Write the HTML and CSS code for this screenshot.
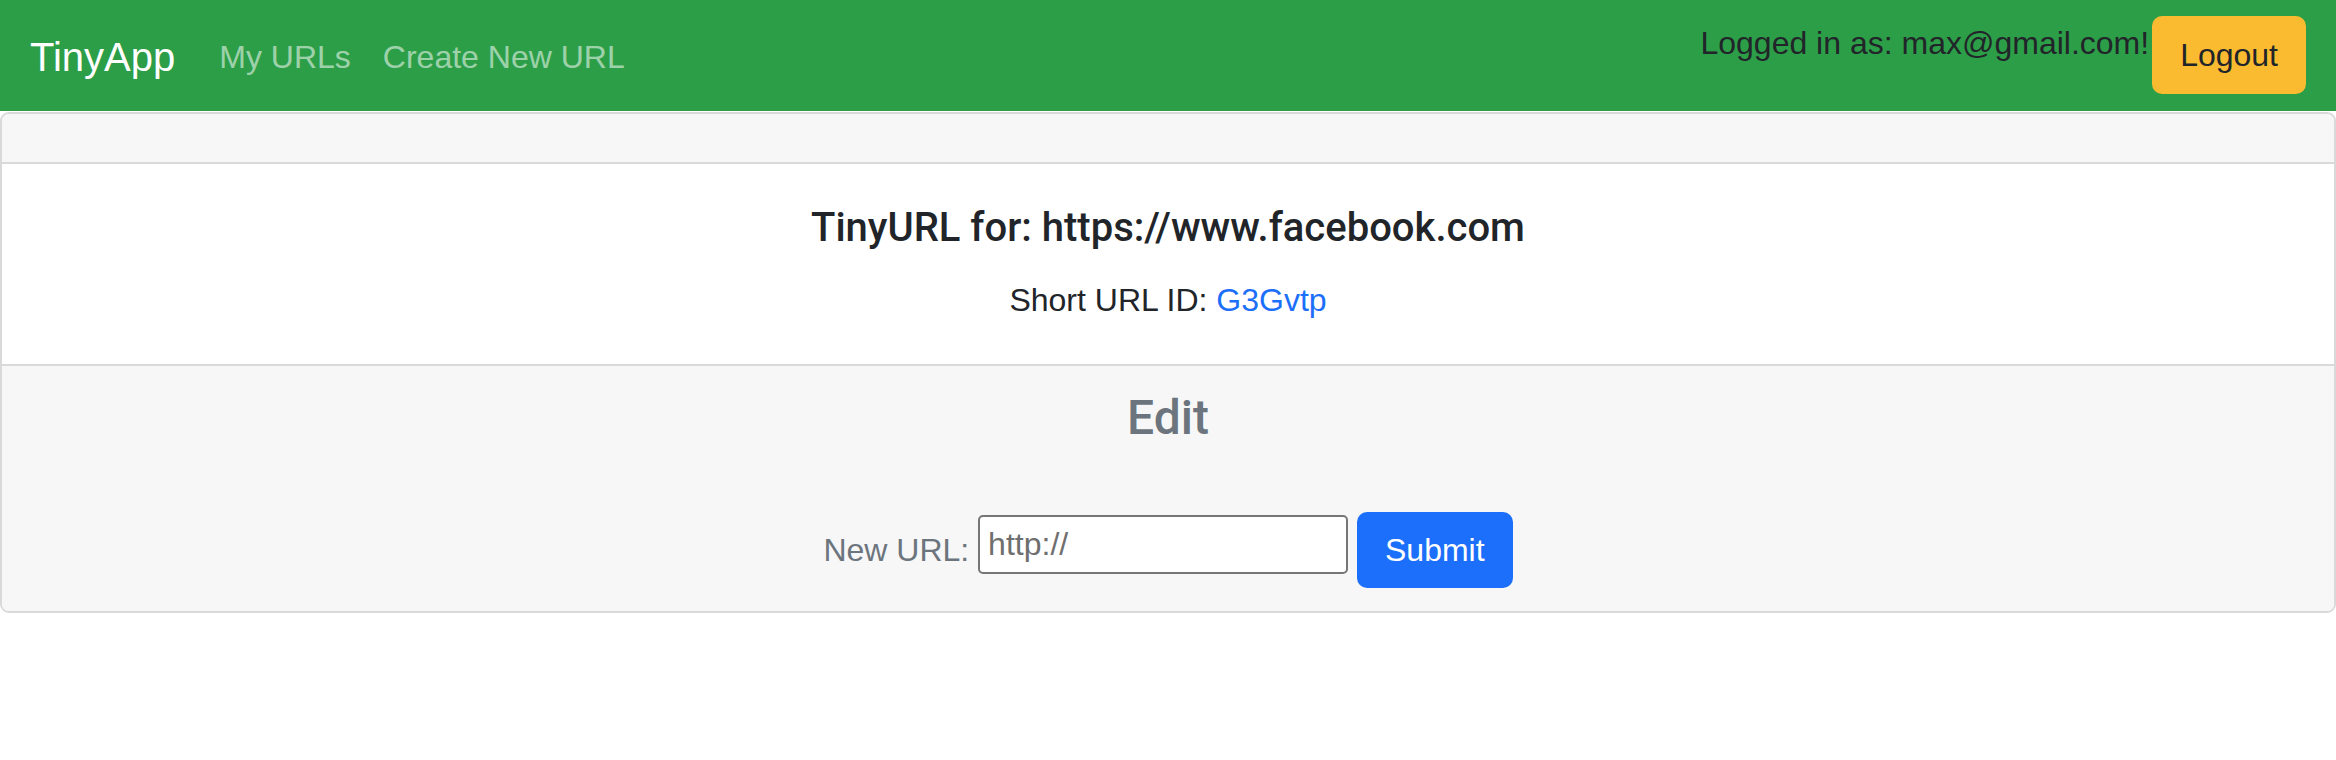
FILE: index.html
```html
<!DOCTYPE html>
<html lang="en">
<head>
<meta charset="utf-8">
<title>TinyApp</title>
<link rel="stylesheet" href="styles.css">
</head>
<body>
<nav class="navbar">
  <a class="brand" href="#">TinyApp</a>
  <a class="nav-link" href="#">My URLs</a>
  <a class="nav-link" href="#">Create New URL</a>
  <div class="user">
    <span class="user-text">Logged in as: max@gmail.com!</span>
    <button class="btn btn-warning" type="button">Logout</button>
  </div>
</nav>
<main class="card">
  <div class="card-header"></div>
  <div class="card-body">
    <h5 class="card-title">TinyURL for: https://www.facebook.com</h5>
    <p class="card-text">Short URL ID: <a class="link" href="#">G3Gvtp</a></p>
  </div>
  <div class="card-footer">
    <h4 class="edit-title">Edit</h4>
    <form class="edit-form">
      <label class="edit-label" for="newurl">New URL:</label>
      <input class="edit-input" id="newurl" type="text" placeholder="http://">
      <button class="btn btn-primary" type="button">Submit</button>
    </form>
  </div>
</main>
</body>
</html>
```
FILE: styles.css
```css
* { box-sizing: border-box; }
html, body {
  margin: 0;
  padding: 0;
  background: #ffffff;
}
body {
  font-family: "Liberation Sans", Arial, sans-serif;
  font-size: 32px;
  line-height: 48px;
  color: #212529;
}
a { text-decoration: none; }

.navbar {
  height: 111px;
  background: #2d9e48;
  display: flex;
  align-items: center;
  padding: 3px 30px 0 30px;
}
.brand {
  color: #ffffff;
  font-size: 40px;
  line-height: 60px;
  margin-right: 28px;
}
.nav-link {
  color: rgba(255, 255, 255, 0.55);
  font-size: 32px;
  line-height: 48px;
  padding: 0 16px;
}
.user {
  margin-left: auto;
  display: flex;
  align-items: flex-start;
  margin-top: -4px;
}
.user-text {
  padding-top: 3px;
  margin-right: 3px;
  color: #212529;
}

.btn {
  font-family: inherit;
  font-size: 32px;
  line-height: 48px;
  padding: 13px 26px;
  border: 2px solid transparent;
  border-radius: 10px;
  cursor: pointer;
}
.btn-warning {
  background: #fbbb30;
  border-color: #fbbb30;
  color: #212529;
}
.btn-primary {
  background: #1c6ffa;
  border-color: #1c6ffa;
  color: #ffffff;
  padding-top: 12px;
  padding-bottom: 12px;
}

.card {
  display: block;
  margin-top: 1px;
  border: 2px solid #d9d9d9;
  border-radius: 9px;
  overflow: hidden;
}
.card-header {
  height: 50px;
  background: #f7f7f7;
  border-bottom: 2px solid #d9d9d9;
}
.card-body {
  background: #ffffff;
  text-align: center;
  padding: 40px 32px 40px;
}
.card-title {
  margin: 0 0 24px;
  font-family: Roboto, "Liberation Sans", sans-serif;
  font-size: 40px;
  line-height: 48px;
  font-weight: 500;
}
.card-text {
  margin: 0;
}
.link { color: #1c6ffa; }

.card-footer {
  background: #f7f7f7;
  border-top: 2px solid #d9d9d9;
  text-align: center;
  padding: 23px 32px 23px;
}
.edit-title {
  margin: 0 0 65px;
  font-family: Roboto, "Liberation Sans", sans-serif;
  font-size: 48px;
  line-height: 58px;
  font-weight: 500;
  color: #6c757d;
}
.edit-form {
  margin: 0;
}
.edit-label {
  color: #6c757d;
}
.edit-input {
  width: 370px;
  height: 59px;
  border: 2px solid #767676;
  border-radius: 5px;
  padding: 0 8px;
  font-family: inherit;
  font-size: 32px;
  color: #212529;
  background: #ffffff;
  vertical-align: 6px;
}
.edit-input::placeholder {
  color: #6f6f6f;
  opacity: 1;
}
```
